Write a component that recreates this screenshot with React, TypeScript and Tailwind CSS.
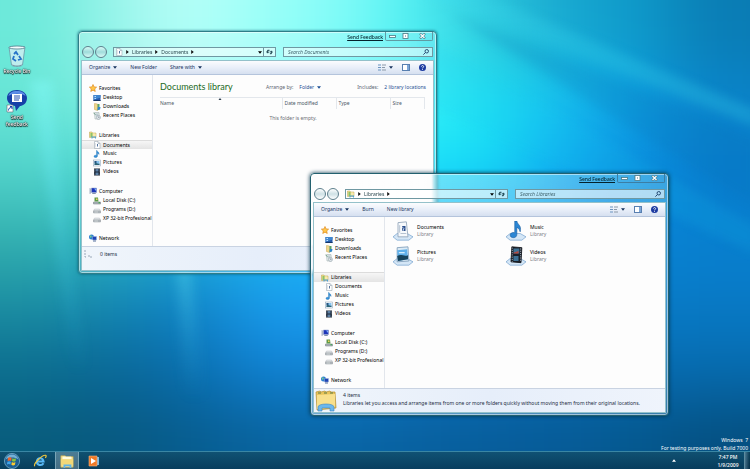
import type { ReactNode } from "react";

/* ---------- Wallpaper ---------- */

const tones: string[][] = [
  ["#6ce9da", "#98f4ea", "#b8fff8", "#9cfff8", "#84fcf8", "#50f0f2", "#2cc8dc", "#18a8d0", "#0e9aca", "#0a7cb4"],
  ["#68e6d6", "#80f0e4", "#98fcf4", "#84fcf8", "#60f8fc", "#38f2f8", "#20e6f4", "#16c0f0", "#0c9ce0", "#0a84ca"],
  ["#52d4cc", "#50dcd8", "#50e4e8", "#40e4f4", "#28e4f8", "#1ae2f8", "#14d8f6", "#10acf0", "#0a8ee0", "#087ccc"],
  ["#34b2b0", "#30b8c4", "#22b4dc", "#1cb8ec", "#18b8f4", "#16b4f6", "#12a8f4", "#0c96e8", "#0884d6", "#0880d0"],
  ["#1c90a4", "#1488b4", "#1084c8", "#1a9cec", "#1aa2f8", "#1498f0", "#108ce6", "#0a80d4", "#087cc8", "#087ac6"],
  ["#0c6e90", "#0a6898", "#0a6eae", "#1082d4", "#1082d6", "#0c78c8", "#0a74be", "#0870b8", "#066cb2", "#066cb0"],
  ["#085c7c", "#08587e", "#075c8e", "#08629c", "#0864a4", "#08609e", "#075c9a", "#065a96", "#05588e", "#054e7e"],
];

function Wallpaper() {
  return (
    <svg
      className="absolute inset-0 h-full w-full"
      viewBox="0 0 1000 700"
      preserveAspectRatio="none"
      aria-hidden="true"
    >
      <defs>
        <filter id="melt" x="-20%" y="-20%" width="140%" height="140%" colorInterpolationFilters="sRGB">
          <feGaussianBlur stdDeviation="48" />
        </filter>
        <filter id="ray" x="-50%" y="-50%" width="200%" height="200%" colorInterpolationFilters="sRGB">
          <feGaussianBlur stdDeviation="7" />
        </filter>
        <linearGradient id="fade" x1="0" y1="0" x2="0" y2="1">
          <stop offset="0" stopColor="#8ff" stopOpacity="0.4" />
          <stop offset="1" stopColor="#3cf" stopOpacity="0" />
        </linearGradient>
      </defs>
      <g filter="url(#melt)">
        {tones.map((row, y) =>
          row.map((fill, x) => {
            const left = x === 0 ? -200 : x * 100;
            const top = y === 0 ? -200 : y * 100;
            const right = x === 9 ? 1200 : x * 100 + 101;
            const bottom = y === 6 ? 900 : y * 100 + 101;
            return (
              <rect key={`${x}-${y}`} x={left} y={top} width={right - left} height={bottom - top} fill={fill} />
            );
          }),
        )}
      </g>
      <g filter="url(#ray)">
        <path d="M560 -10 L640 -10 L1010 165 L1010 190 Z" fill="#3cdcf0" opacity="0.25" />
        <path d="M560 50 L1010 340 L1010 380 L560 150 Z" fill="#18c8f4" opacity="0.14" />
        <path d="M600 20 L1010 210 L1010 310 Z" fill="#0468b0" opacity="0.16" />
        <path d="M40 120 L70 120 C80 300 100 420 118 560 L95 560 C80 400 60 260 40 120 Z" fill="url(#fade)" />
        <path d="M235 400 L255 400 L275 600 L245 600 Z" fill="url(#fade)" opacity="0.6" />
      </g>
    </svg>
  );
}

/* ---------- Small icons ---------- */

type IconName =
  | "star" | "desktop" | "downloads" | "recent" | "libraries" | "document"
  | "music" | "pictures" | "videos" | "computer" | "osdisk" | "disk" | "network";

const drawings: Record<IconName, ReactNode> = {
  star: (
    <path d="M8 1l2.1 4.8 5.1.5-3.8 3.5 1.1 5.1L8 12.300l-4.500 2.600 1.100-5.100L.8 6.300l5.100-.5z" fill="#ffc64a" stroke="#dd8413" strokeWidth="1.300" />
  ),
  desktop: (
    <>
      <rect x="1" y="2" width="14" height="12" fill="#2458a8" />
      <path d="M1 2h14v5L1 12z" fill="#3f86d0" />
      <path d="M3 4h3v2H3zM3 8h3v2H3z" fill="#b9dcff" />
      <path d="M1 12h14v2H1z" fill="#153668" />
    </>
  ),
  downloads: (
    <>
      <path d="M3 1l6 1v13l-6-2z" fill="#f0d68a" stroke="#c7a54c" />
      <path d="M9 2h4v11l-4 2z" fill="#5aa46c" />
      <path d="M10 8l5 0-1 5-5 1z" fill="#2f84d0" />
    </>
  ),
  recent: (
    <>
      <path d="M3 1h9l1 13H4z" fill="#e7eeee" stroke="#94a6a6" />
      <path d="M5 4h6M5 6h5M6 8h5" stroke="#8aa0ac" />
      <path d="M1 2l4 3" stroke="#6f9c86" strokeWidth="2" />
      <circle cx="11" cy="11" r="4" fill="#dfe6ea" stroke="#8d9aa2" />
      <path d="M11 9v2h2" stroke="#567" fill="none" />
    </>
  ),
  libraries: (
    <>
      <path d="M1 2h5l1 2h7v9H1z" fill="#f3df90" stroke="#b9a24c" />
      <path d="M3 4h4v8H3z" fill="#8cc26a" />
      <path d="M8 5h5v5H8z" fill="#f7eab0" />
      <path d="M5 15v-4h9v4h-2v-2H7v2z" fill="#4ea3dc" />
    </>
  ),
  document: (
    <>
      <path d="M3 1h7l4 4v10H3z" fill="#fff" stroke="#8b98a6" />
      <path d="M8 6h2v5H8z" fill="#5574a0" />
      <path d="M5 4v9" stroke="#c4ccd6" />
      <path d="M10 1v4h4" fill="#dde5ee" stroke="#8b98a6" />
    </>
  ),
  music: (
    <path d="M8 1c1 3 5 3 4 8-1-2-2-3-3-3v6c0 2-2 3-4 3s-3-1-3-2.500S4 10 7 10.500V1z" fill="#3292dc" stroke="#14609f" strokeWidth=".6" />
  ),
  pictures: (
    <>
      <rect x="1" y="2" width="14" height="12" fill="#fff" stroke="#7b96b0" />
      <path d="M3 4h10v8H3z" fill="#86c2ec" />
      <path d="M3 9c3-3 6 2 10 0v3H3z" fill="#2c6478" />
      <path d="M3 4h4v4H3z" fill="#27537e" />
    </>
  ),
  videos: (
    <>
      <path d="M2 1h12v14H2z" fill="#1c2634" />
      <path d="M5 2h6v5H5zM5 9h6v5H5z" fill="#5b7fa4" />
      <path d="M3 2v12M13 2v12" stroke="#c8d2dc" strokeDasharray="1 1.500" />
    </>
  ),
  computer: (
    <>
      <path d="M1 2l3 1v10l-3 1z" fill="#aab6c8" />
      <path d="M5 2h10v9H5z" fill="#1c35b8" stroke="#8d9cc4" />
      <path d="M10 3l4 0v5z" fill="#7fb2ff" />
      <path d="M7 12h6l1 2H6z" fill="#8392ac" />
    </>
  ),
  osdisk: (
    <>
      <path d="M1 10h14v4H1z" fill="#b0b8be" stroke="#6f777d" />
      <path d="M3 1h7l1 8H3z" fill="#5f9a4a" />
      <path d="M6 3h3v3H6z" fill="#f0d060" />
      <path d="M11 11.500h3" stroke="#2faa3a" strokeWidth="2" />
    </>
  ),
  disk: (
    <>
      <path d="M3 6h10l2 4H1z" fill="#e3e6e9" stroke="#a3a9ae" strokeWidth=".7" />
      <path d="M1 10h14v4H1z" fill="#b7bdc2" stroke="#7c8388" strokeWidth=".8" />
      <path d="M3 12h7" stroke="#f4f6f7" />
    </>
  ),
  network: (
    <>
      <circle cx="5" cy="6" r="5" fill="#2b7fd0" />
      <path d="M2 4c2-3 4 0 3 2S2 8 2 4z" fill="#7fd08a" />
      <path d="M7 5h8v7H7z" fill="#1d43b4" stroke="#9db3dc" />
      <path d="M8 13h6v2H8z" fill="#56709c" />
    </>
  ),
};

function Icon({ name }: { name: IconName }) {
  return (
    <svg viewBox="0 0 16 16" className="size-2 shrink-0" fill="none" aria-hidden="true">
      {drawings[name]}
    </svg>
  );
}

function Caret() {
  return (
    <svg viewBox="0 0 6 4" className="h-[3px] w-1 shrink-0" aria-hidden="true">
      <path d="M0 0h6L3 4z" fill="currentColor" />
    </svg>
  );
}

function Arrow() {
  return (
    <svg viewBox="0 0 4 6" className="h-1 w-[3px] shrink-0" aria-hidden="true">
      <path d="M0 0v6l4-3z" fill="#111" />
    </svg>
  );
}

/* ---------- Explorer window ---------- */

const places: { head: IconName; label: string; items: { icon: IconName; label: string }[] }[] = [
  {
    head: "star",
    label: "Favorites",
    items: [
      { icon: "desktop", label: "Desktop" },
      { icon: "downloads", label: "Downloads" },
      { icon: "recent", label: "Recent Places" },
    ],
  },
  {
    head: "libraries",
    label: "Libraries",
    items: [
      { icon: "document", label: "Documents" },
      { icon: "music", label: "Music" },
      { icon: "pictures", label: "Pictures" },
      { icon: "videos", label: "Videos" },
    ],
  },
  {
    head: "computer",
    label: "Computer",
    items: [
      { icon: "osdisk", label: "Local Disk (C:)" },
      { icon: "disk", label: "Programs (D:)" },
      { icon: "disk", label: "XP 32-bit Profesional" },
    ],
  },
  { head: "network", label: "Network", items: [] },
];

const chosen = "border-t border-[#dcdcdc] bg-linear-to-b from-[#f6f6f6] to-[#e4e4e4]";

function Sidebar({ selected }: { selected: string }) {
  return (
    <nav className="flex w-[71px] shrink-0 flex-col gap-[10px] overflow-hidden border-r border-[#e2e6ec] pt-2 text-black">
      {places.map((group) => (
        <div key={group.label} className="flex flex-col">
          <button
            className={`flex h-[10px] items-center gap-[2px] pl-[7px] whitespace-nowrap ${selected === group.label ? chosen : ""}`}
          >
            <Icon name={group.head} />
            {group.label}
          </button>
          {group.items.map((item) => (
            <button
              key={item.label}
              className={`flex h-[9px] items-center gap-[2px] pl-[11px] whitespace-nowrap ${selected === item.label ? chosen : ""}`}
            >
              <Icon name={item.icon} />
              {item.label}
            </button>
          ))}
        </div>
      ))}
    </nav>
  );
}

function RoundNav() {
  return (
    <div className="flex items-center gap-px">
      {["Back", "Forward"].map((label) => (
        <button
          key={label}
          aria-label={label}
          className="size-3 rounded-full border border-[#5d7f8c] bg-linear-to-b from-white/60 via-[#9fc4cc]/50 to-white/60"
        />
      ))}
    </div>
  );
}

function CaptionButtons({ edge }: { edge: string }) {
  return (
    <div className={`flex h-[9px] rounded-b-xs border-x border-b ${edge}`}>
      <button aria-label="Minimize" className="flex w-[13px] items-center justify-center">
        <svg viewBox="0 0 7 6" className="h-[6px] w-[7px]" fill="#fff" stroke="#4b7884">
          <rect x="0.500" y="2.500" width="6" height="2" strokeWidth=".8" />
        </svg>
      </button>
      <button aria-label="Maximize" className="flex w-[13px] items-center justify-center">
        <svg viewBox="0 0 7 6" className="h-[6px] w-[7px]" fill="#fff" stroke="#4b7884">
          <rect x="1" y="0.500" width="5" height="5" strokeWidth=".8" />
          <path d="M3 3h1" />
        </svg>
      </button>
      <button aria-label="Close" className="flex w-5 items-center justify-center">
        <svg viewBox="0 0 7 6" className="h-[6px] w-[7px]" fill="none">
          <path d="M1 0.500l5 5M6 0.500l-5 5" stroke="#4b7884" strokeWidth="2.200" />
          <path d="M1.500 1l4 4M5.500 1l-4 4" stroke="#fff" strokeWidth="1.200" />
        </svg>
      </button>
    </div>
  );
}

type WindowProps = {
  className: string;
  field: string;
  edge: string;
  icon: IconName;
  crumbs: string[];
  search: string;
  menu: { label: string; caret?: boolean }[];
  selected: string;
  status: ReactNode;
  children: ReactNode;
};

function ExplorerWindow(props: WindowProps) {
  return (
    <section
      className={`absolute flex h-[243px] w-[359px] flex-col rounded-[4px] border px-[2px] pb-[2px] inset-ring inset-ring-white/50 ${props.className}`}
    >
      <header className="flex h-[14px] shrink-0 items-start justify-end gap-[2px] pr-px">
        <a href="#feedback" className="pt-[2px] text-[5px]/[7px] font-medium text-[#04222c] underline">
          Send Feedback
        </a>
        <CaptionButtons edge={props.edge} />
      </header>

      <div className="flex h-[14px] shrink-0 items-start gap-[7px] px-px">
        <div className="flex min-w-0 flex-1 items-center gap-1">
          <RoundNav />
          <div className={`ml-[2px] flex h-[10px] min-w-0 flex-1 border border-[#6f98a2] ${props.field}`}>
            <div className="flex min-w-0 flex-1 items-center gap-[3px] pr-px pl-px text-[#1c3a42]">
              <Icon name={props.icon} />
              <Arrow />
              {props.crumbs.map((crumb) => (
                <span key={crumb} className="flex items-center gap-[3px]">
                  <button>{crumb}</button>
                  <Arrow />
                </span>
              ))}
              <button aria-label="Previous locations" className="ml-auto text-black">
                <Caret />
              </button>
            </div>
            <button
              aria-label="Refresh"
              className="flex w-3 items-center justify-center border-l border-[#6f98a2]"
            >
              <svg viewBox="0 0 8 7" className="h-[6px] w-[7px]" fill="none" stroke="#0d3340" strokeWidth="1.100">
                <path d="M4 1.500H1.800V4M.5 3l1.300 1.800L3.200 3M4.500 5.500h1.700V3M4.800 4l1.400-1.800L7.500 4" />
              </svg>
            </button>
          </div>
        </div>
        <label className={`mt-px flex h-[10px] w-[150px] items-center border border-[#6f98a2] pr-[3px] pl-1 ${props.field}`}>
          <input
            type="search"
            aria-label={props.search}
            placeholder={props.search}
            className="h-2 min-w-0 flex-1 bg-transparent italic outline-none placeholder:text-[#3f626b]"
          />
          <svg viewBox="0 0 8 8" className="size-[6px]" fill="none" stroke="#1a3c66" strokeWidth="1.200">
            <circle cx="5" cy="3" r="2.300" />
            <path d="M3.300 4.700L.5 7.500" />
          </svg>
        </label>
      </div>

      <div className="flex min-h-0 flex-1 flex-col border border-[#4f9aa8]/60 bg-[#fdfdfd]">
        <div className="flex h-[14px] shrink-0 items-center gap-[13px] border-b border-[#b4c4dc] bg-linear-to-b from-[#fbfcfe] via-[#e9eff9] to-[#d6e0f0] px-[7px] text-[#16325c]">
          {props.menu.map((entry) => (
            <button key={entry.label} className="flex items-center gap-[3px]">
              {entry.label}
              {entry.caret && <Caret />}
            </button>
          ))}
          <div className="ml-auto flex items-center gap-[9px]">
            <button aria-label="Change your view" className="flex items-center gap-[3px]">
              <svg viewBox="0 0 8 7" className="h-[7px] w-2" fill="none">
                <path d="M0 1h3M0 3.500h3M0 6h3" stroke="#6b94c0" strokeWidth="1.200" />
                <path d="M4 1h4M4 3.500h3M4 6h4" stroke="#8c99a8" />
              </svg>
              <Caret />
            </button>
            <button aria-label="Show the preview pane">
              <svg viewBox="0 0 8 7" className="h-[7px] w-2">
                <rect x="0.500" y="0.500" width="7" height="6" fill="#fff" stroke="#587fb0" />
                <path d="M5 1h2v5H5z" fill="#7ca6d8" />
              </svg>
            </button>
            <button aria-label="Get help">
              <svg viewBox="0 0 8 8" className="size-[7px]">
                <circle cx="4" cy="4" r="4" fill="#1c3aa0" />
                <path d="M2.800 3c0-1.700 2.500-1.500 2.500-.1C5.300 3.800 4 3.900 4 5M4 5.800v.9" stroke="#fff" strokeWidth="1" fill="none" />
              </svg>
            </button>
          </div>
        </div>
        <div className="flex min-h-0 flex-1">
          <Sidebar selected={props.selected} />
          <main className="min-w-0 flex-1">{props.children}</main>
        </div>
        <footer className="flex h-6 shrink-0 items-start border-t border-[#c9d3e2] bg-linear-to-r from-[#f0f5fb] via-[#e6eefa] to-[#eff4fc] text-[#1c2c44]">
          {props.status}
        </footer>
      </div>
    </section>
  );
}

/* ---------- Library contents ---------- */

function Tray() {
  return <path d="M0 19l5-4h12l7 4-5 4H5z" fill="#d4e6f6" stroke="#6f9fcc" strokeWidth=".8" />;
}

const libraries: { label: string; art: ReactNode }[] = [
  {
    label: "Documents",
    art: (
      <>
        <path d="M6 2l10-1 2 18H6z" fill="#f6f9fc" stroke="#8fa2b8" />
        <path d="M11 6h4v6h-4z" fill="#2c4f8c" />
        <path d="M11 7l2 2-1 3" stroke="#dce8f8" />
        <path d="M8 5v9M9 15h7" stroke="#a9b8c8" />
      </>
    ),
  },
  {
    label: "Music",
    art: (
      <path d="M13 0c1 5 6 5 4 13-1-4-3-5-4-5v8c0 3-2 4-4 4s-4-1-4-3 2-4 5.500-3V0z" fill="#2b86d4" stroke="#14599c" strokeWidth=".7" />
    ),
  },
  {
    label: "Pictures",
    art: (
      <>
        <path d="M5 2l13-1 1 17-14 1z" fill="#dcebf6" stroke="#7e9cb8" />
        <path d="M5 5l12-1 1 12-12 2z" fill="#5fb0ea" />
        <path d="M5 12c5-3 8 1 13-1v5l-12 2z" fill="#17445c" />
        <path d="M7 8h7" stroke="#d8f0ff" strokeWidth="1.500" />
      </>
    ),
  },
  {
    label: "Videos",
    art: (
      <>
        <path d="M7 1l12 1-1 18-12-1z" fill="#1b222c" stroke="#0b0f14" />
        <path d="M9 3h7v6H9zM9 12h6v6H9z" fill="#3e7296" />
        <path d="M9 8l6-2v3H9z" fill="#b8463c" />
        <path d="M7.500 2v17M17.500 3v16" stroke="#c6d0da" strokeDasharray="1.200 1.500" />
      </>
    ),
  },
];

const columns = [
  { label: "Name", width: "w-[122px]" },
  { label: "Date modified", width: "w-[54px]" },
  { label: "Type", width: "w-[54px]" },
  { label: "Size", width: "w-[34px]" },
];

function DocumentsPane() {
  return (
    <div className="flex h-full flex-col px-[7px]">
      <div className="flex h-[22px] items-center justify-between pt-px">
        <h1 className="font-[Lato,sans-serif] text-[9px]/[12px] text-[#1c6a24]">Documents library</h1>
        <div className="flex items-center gap-9 pt-[2px] text-[#5a6470]">
          <span className="flex items-center gap-[6px]">
            Arrange by:
            <button className="flex items-center gap-[3px] text-[#1d4f94]">
              Folder <Caret />
            </button>
          </span>
          <span className="flex items-center gap-[6px]">
            Includes:
            <a href="#locations" className="text-[#1d4f94]">
              2 library locations
            </a>
          </span>
        </div>
      </div>
      <div className="relative text-[#4c5866]">
        <svg viewBox="0 0 6 4" className="absolute top-px left-[58px] h-[2px] w-1" aria-hidden="true">
          <path d="M0 4h6L3 0z" fill="#2b3b4b" />
        </svg>
        <table className="table-fixed border-collapse">
          <thead>
            <tr className="h-[11px]">
              {columns.map((column) => (
                <th
                  key={column.label}
                  scope="col"
                  className={`${column.width} border-t border-r border-[#e3e7ec] p-0 pl-[2px] text-left font-normal first:pl-0`}
                >
                  {column.label}
                </th>
              ))}
            </tr>
          </thead>
        </table>
      </div>
      <p className="pt-[6px] text-center text-[#6c7076]">This folder is empty.</p>
    </div>
  );
}

function LibrariesPane() {
  return (
    <div className="grid grid-cols-[113px_1fr] gap-y-[5px] px-2 pt-1">
      {libraries.map((library) => (
        <button key={library.label} className="flex h-5 items-center gap-1 text-left">
          <svg viewBox="0 0 24 24" className="size-5 shrink-0" fill="none" aria-hidden="true">
            <Tray />
            {library.art}
          </svg>
          <span className="flex flex-col text-black">
            {library.label}
            <span className="text-[#7d8288]">Library</span>
          </span>
        </button>
      ))}
    </div>
  );
}

/* ---------- Desktop and taskbar ---------- */

const iconLabel = "text-[5px]/[7px] font-medium text-white text-shadow-[0_0_1px_#000,0_0_2px_#000,0_1px_1px_#000]";

function DesktopIcons() {
  return (
    <div className="absolute top-[45px] left-0 flex w-[34px] flex-col gap-[14px]">
      <button className="flex flex-col items-center gap-px">
        <svg viewBox="0 0 20 22" className="h-[22px] w-5" fill="none" aria-hidden="true">
          <path d="M2 2l16 0-2.500 18c-2 2-9 2-11 0z" fill="#d9eef4" fillOpacity=".75" stroke="#6c97a6" strokeWidth=".8" />
          <ellipse cx="10" cy="2.500" rx="8" ry="1.500" fill="#f4fbfd" stroke="#557d8c" strokeWidth=".8" />
          <path d="M7 9l2-2 2 3M12 11l2 3-3 1M9 16l-3-2 1-3" stroke="#2673c8" strokeWidth="1.800" />
          <path d="M5 19c2 2 8 2 10 0l-1 2H6z" fill="#7a99a6" />
        </svg>
        <span className={iconLabel}>Recycle Bin</span>
      </button>
      <button className="flex flex-col items-center gap-px">
        <svg viewBox="0 0 22 24" className="h-6 w-[22px]" fill="none" aria-hidden="true">
          <path d="M11 1c6 0 10 4 10 8 0 6-5 8-7 8l-4 5-1-5C4 16 1 13 1 9c0-5 4-8 10-8z" fill="#1740a8" />
          <path d="M11 2c5 0 8 2 8.500 5C16 4 6 4 2.500 7 3 4 6 2 11 2z" fill="#5d8ce6" />
          <path d="M6 5h10v8H6z" fill="#fff" />
          <path d="M8 7h6M8 9h6M8 11h5" stroke="#2a50b0" />
          <path d="M1 16h6v7H1z" fill="#fff" stroke="#667" strokeWidth=".6" />
          <path d="M2.500 21.500c0-2 1-3 3-3M4 17.500h2v2.500" stroke="#1b3fae" />
        </svg>
        <span className={`w-6 ${iconLabel}`}>Send feedback</span>
      </button>
    </div>
  );
}

function Taskbar() {
  return (
    <footer className="absolute inset-x-0 bottom-0 flex h-[18px] items-stretch border-t border-[#3a86a4] bg-linear-to-b from-[#11506f]/90 to-[#083a58]/90 text-white">
      <button aria-label="Start" className="flex w-6 items-center justify-center">
        <svg viewBox="0 0 20 20" className="size-4" aria-hidden="true">
          <circle cx="10" cy="10" r="9.500" fill="#1c5f94" stroke="#8fc4dc" strokeWidth=".8" />
          <path d="M2 8c2-8 14-8 16 0-5-3-11-3-16 0z" fill="#8cc6e6" opacity=".8" />
          <path d="M5 6c2-1 3-1 4.500 0L9 10c-1-1-3-1-4.500 0z" fill="#f0642c" />
          <path d="M10.500 6.500c1.500 1 3 1 4.500 0L14.500 10c-1.500 1-3 1-4.500 0z" fill="#86c440" />
          <path d="M4.200 11c1.500-1 3-1 4.500 0l-.6 3.500c-1.500-1-3-1-4.500 0z" fill="#3fa4e8" />
          <path d="M9.800 11.300c1.500 1 3 1 4.500 0l-.6 3.500c-1.500 1-3 1-4.500 0z" fill="#fccb30" />
        </svg>
      </button>
      <div className="flex gap-[3px] pl-1">
        <button aria-label="Internet Explorer" className="flex w-6 items-center justify-center">
          <svg viewBox="0 0 16 16" className="size-[14px]" fill="none" aria-hidden="true">
            <path d="M12 10.500c-2 3.500-8 2.500-7.500-2s6.500-5 7.500 0H5" stroke="#56b6f4" strokeWidth="2.400" />
            <path d="M2 14c-2-3 9-13.500 12.500-12.500 1 .5.500 2-.5 3" stroke="#f4c83c" strokeWidth="1.300" />
          </svg>
        </button>
        <button
          aria-label="Windows Explorer"
          className="flex w-6 items-center justify-center border-x border-[#8fb8c8]/70 bg-white/25"
        >
          <svg viewBox="0 0 16 16" className="size-[14px]" aria-hidden="true">
            <path d="M1 2h5l1 1h8v12H1z" fill="#f6e394" stroke="#c7a848" strokeWidth=".7" />
            <path d="M3 3h10v3H3z" fill="#fffbe0" />
            <path d="M1 6h14v7H1z" fill="#f2d878" />
            <path d="M4 16v-4h9v4h-2v-2H6v2z" fill="#5cb4ea" />
          </svg>
        </button>
        <button aria-label="Windows Media Player" className="flex w-6 items-center justify-center">
          <svg viewBox="0 0 12 12" className="size-3" aria-hidden="true">
            <path d="M4 2h7v8H4z" fill="#7cb8e0" />
            <path d="M1 1h8v10H1z" fill="#ee7a28" stroke="#f8b478" strokeWidth=".6" />
            <path d="M3 3l5 3-5 3z" fill="#fff" />
          </svg>
        </button>
      </div>
      <div className="ml-auto flex items-stretch">
        <button aria-label="Show hidden icons" className="flex w-3 items-center justify-center">
          <svg viewBox="0 0 6 4" className="h-[3px] w-1" aria-hidden="true">
            <path d="M0 4h6L3 0z" fill="#fff" />
          </svg>
        </button>
        <div className="flex w-16 flex-col items-center justify-center pl-8 text-[5px]/[8px] font-medium">
          <time>7:47 PM</time>
          <time>1/9/2009</time>
        </div>
        <button
          aria-label="Show desktop"
          className="w-[6px] border-l border-[#5d8ca0] bg-linear-to-r from-white/25 to-black/20"
        />
      </div>
    </footer>
  );
}

export default function App() {
  return (
    <div className="relative h-screen w-full overflow-hidden font-['Noto_Sans',sans-serif] text-[5px]/[7px]">
      <Wallpaper />
      <DesktopIcons />

      <ExplorerWindow
        className="top-[31px] left-[78px] border-[#2f7d88] bg-white/20 shadow-[0_0_3px_#0a5a70]"
        field="bg-white/50"
        edge="border-[#5f9ca4]"
        icon="document"
        crumbs={["Libraries", "Documents"]}
        search="Search Documents"
        menu={[
          { label: "Organize", caret: true },
          { label: "New Folder" },
          { label: "Share with", caret: true },
        ]}
        selected="Documents"
        status={
          <div className="flex items-center gap-2 pt-[3px] pl-[2px]">
            <svg viewBox="0 0 8 8" className="size-2" fill="none" aria-hidden="true">
              <path d="M1 0v7h2M5 5v2h3" stroke="#9aa8b8" strokeDasharray="2 1" />
            </svg>
            0 items
          </div>
        }
      >
        <DocumentsPane />
      </ExplorerWindow>

      <ExplorerWindow
        className="top-[173px] left-[310px] border-[#23616f] bg-linear-to-r from-white/40 to-white/20 shadow-[0_0_4px_#06364c] backdrop-blur-[1px]"
        field="bg-white/60"
        edge="border-[#3c7ea4]"
        icon="libraries"
        crumbs={["Libraries"]}
        search="Search Libraries"
        menu={[{ label: "Organize", caret: true }, { label: "Burn" }, { label: "New library" }]}
        selected="Libraries"
        status={
          <div className="flex items-start gap-[6px] pt-px pl-px">
            <svg viewBox="0 0 22 22" className="size-[22px]" aria-hidden="true">
              <path d="M1 2l4-1 1 1 4-1 1 1 4-1 1 1 4 0 1 16-19 2z" fill="#e9c45a" stroke="#b48f30" strokeWidth=".7" />
              <path d="M2 5l18-1v13L2 19z" fill="#f8e08c" />
              <path d="M3 3h3M9 3h3M15 3h3" stroke="#5a7a48" strokeWidth="1.200" />
              <path d="M3 21v-4c0-4 16-4 16 0v4h-4v-3H7v3z" fill="#6cb8ec" stroke="#3c84c4" strokeWidth=".6" />
            </svg>
            <div className="flex flex-col gap-px pt-[2px] whitespace-nowrap">
              <span>4 items</span>
              <span>
                Libraries let you access and arrange items from one or more folders quickly without moving them from
                their original locations.
              </span>
            </div>
          </div>
        }
      >
        <LibrariesPane />
      </ExplorerWindow>

      <div className="absolute right-[2px] bottom-[17px] flex flex-col items-end text-[5px]/[8px] whitespace-pre text-white">
        <span>{"Windows  7"}</span>
        <span>For testing purposes only. Build 7000</span>
      </div>
      <Taskbar />
    </div>
  );
}
